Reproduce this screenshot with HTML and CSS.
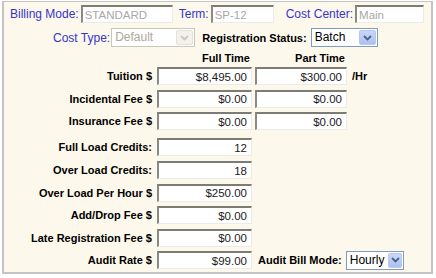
FILE: index.html
```html
<!DOCTYPE html>
<html lang="en">
<head>
  <meta charset="UTF-8" />
  <title>Billing Setup</title>
  <link rel="stylesheet" href="styles.css">
</head>
<body>
  <div class="panel">
    <div class="top-row">
      <label class="lbl">Billing Mode:</label>
      <input type="text" class="fld ro w-mode" value="STANDARD" readonly />
      <label class="lbl term">Term:</label>
      <input type="text" class="fld ro w-term" value="SP-12" readonly />
      <label class="lbl center">Cost Center:</label>
      <input type="text" class="fld ro w-center" value="Main" readonly />
    </div>

    <div class="type-row">
      <label class="lbl">Cost Type:</label>
      <div class="dd disabled w-type">
        <span class="dd-text">Default</span>
        <span class="dd-btn"><svg width="9" height="6" viewBox="0 0 9 6"><path d="M1 1 L4.5 4.5 L8 1" fill="none" stroke-width="1.8"/></svg></span>
      </div>
      <label class="bold status">Registration Status:</label>
      <div class="dd w-status">
        <span class="dd-text">Batch</span>
        <span class="dd-btn"><svg width="9" height="6" viewBox="0 0 9 6"><path d="M1 1 L4.5 4.5 L8 1" fill="none" stroke-width="1.8"/></svg></span>
      </div>
    </div>

    <div class="fees">
      <span></span>
      <span class="head">Full Time</span>
      <span class="head">Part Time</span>
      <span></span>

      <span class="name">Tuition $</span>
      <input type="text" class="fld num" value="$8,495.00" />
      <input type="text" class="fld num" value="$300.00" />
      <span class="unit">/Hr</span>

      <span class="name">Incidental Fee $</span>
      <input type="text" class="fld num" value="$0.00" />
      <input type="text" class="fld num" value="$0.00" />
      <span></span>

      <span class="name">Insurance Fee $</span>
      <input type="text" class="fld num" value="$0.00" />
      <input type="text" class="fld num" value="$0.00" />
      <span></span>

      <span class="name low">Full Load Credits:</span>
      <input type="text" class="fld num low" value="12" />
      <span class="rest"></span>

      <span class="name">Over Load Credits:</span>
      <input type="text" class="fld num" value="18" />
      <span class="rest"></span>

      <span class="name">Over Load Per Hour $</span>
      <input type="text" class="fld num" value="$250.00" />
      <span class="rest"></span>

      <span class="name">Add/Drop Fee $</span>
      <input type="text" class="fld num" value="$0.00" />
      <span class="rest"></span>

      <span class="name">Late Registration Fee $</span>
      <input type="text" class="fld num" value="$0.00" />
      <span class="rest"></span>

      <span class="name">Audit Rate $</span>
      <input type="text" class="fld num" value="$99.00" />
      <div class="rest audit">
        <span>Audit Bill Mode:</span>
        <div class="dd w-bill">
          <span class="dd-text">Hourly</span>
          <span class="dd-btn"><svg width="9" height="6" viewBox="0 0 9 6"><path d="M1 1 L4.5 4.5 L8 1" fill="none" stroke-width="1.8"/></svg></span>
        </div>
      </div>
    </div>
  </div>
</body>
</html>
```

FILE: styles.css
```css
body {
  margin: 0;
  background: #ffffff;
  font-family: "Liberation Sans", Arial, sans-serif;
  font-size: 11px;
  color: #000;
}
.panel {
  margin: 1px 2px;
  width: 431px;
  height: 273px;
  background: #fdf8ec;
  border: 1px solid #c4c4c4;
  border-width: 1px 2px 2px 2px;
  box-sizing: border-box;
}
.lbl {
  color: #3535c8;
  font-size: 12px;
  white-space: nowrap;
}
.bold {
  font-weight: bold;
  white-space: nowrap;
}
.fld {
  font-family: "Liberation Sans", Arial, sans-serif;
  font-size: 11.5px;
  height: 18px;
  box-sizing: border-box;
  padding: 0 4px;
  background: #fff;
  border-style: solid;
  border-width: 2px 1px 1px 2px;
  border-color: #7c7c74 #ecebe6 #ecebe6 #8a8a84;
  color: #1a1a1a;
  outline: none;
}
.ro {
  color: #a8a8a8;
  padding: 0 2px;
}
.num {
  text-align: right;
  width: 100%;
}

/* top line */
.top-row {
  display: flex;
  align-items: center;
  height: 18px;
  padding: 3px 0 0 6px;
}
.top-row .lbl {
  margin-right: 2px;
}
.w-mode { width: 92px; }
.w-term { width: 63px; }
.w-center { width: 69px; }
.term { margin-left: 6px; }
.center { margin-left: 12px; }

/* dropdowns */
.type-row {
  display: flex;
  align-items: center;
  height: 19px;
  margin-top: 5px;
  padding-left: 49px;
}
.type-row .lbl {
  margin-right: 1px;
}
.status {
  margin: 0 4px 0 7px;
}
.dd {
  display: flex;
  align-items: stretch;
  height: 19px;
  box-sizing: border-box;
  border: 1px solid #7f9db9;
  background: #fff;
  font-size: 12px;
  font-weight: normal;
}
.dd-text {
  flex: 1;
  padding: 0 3px;
  line-height: 17px;
}
.dd-btn {
  width: 15px;
  margin: 1px;
  border: 1px solid #b7c8f0;
  border-radius: 2px;
  background: linear-gradient(#c8d7fa, #aebff0);
  display: flex;
  align-items: center;
  justify-content: center;
}
.dd-btn path {
  stroke: #4d6185;
}
.dd.disabled {
  border-color: #c9c7ba;
  color: #aca899;
}
.dd.disabled .dd-btn {
  background: #f2f1ec;
  border-color: #e2e1da;
}
.dd.disabled .dd-btn path {
  stroke: #c9c7ba;
}
.w-type { width: 84px; }
.w-status { width: 67px; }
.w-bill { width: 58px; }

/* fee grid */
.fees {
  display: grid;
  grid-template-columns: 150px 95px 92px auto;
  grid-template-rows: 14px repeat(3, 22.6px) 26px repeat(5, 22.6px);
  column-gap: 3px;
  align-items: center;
  margin-top: 4px;
  font-weight: bold;
  white-space: nowrap;
}
.fees .head {
  text-align: right;
  padding-right: 2px;
  line-height: 14px;
}
.fees .name {
  text-align: right;
  padding-right: 2px;
  line-height: 18px;
}
.fees .low {
  align-self: end;
  margin-bottom: 2.3px;
}
.fees .unit {
  padding-left: 2px;
  line-height: 18px;
}
.fees .rest {
  grid-column: span 2;
}
.audit {
  display: flex;
  align-items: center;
  gap: 4px;
  padding-left: 3px;
}
```
